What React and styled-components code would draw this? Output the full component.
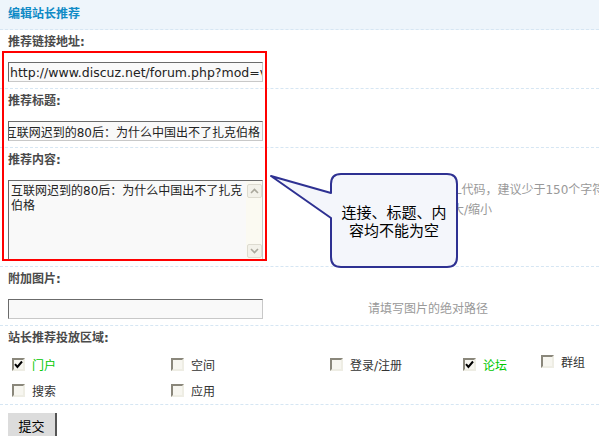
import React from 'react'
import styled, { createGlobalStyle } from 'styled-components'

const fontStack = `"DejaVu Sans", "Noto Sans CJK SC", sans-serif`
const labelColor = "#4a4a4a"
const dashColor = "#d6e6f3"
const greenOn = "#00c800"

const GlobalStyle = createGlobalStyle`
  html, body {
    margin: 0;
    padding: 0;
    overflow: hidden;
    background: #fff;
  }
  body {
    font-family: ${fontStack};
    font-size: 12px;
    color: #333;
  }
`

const Page = styled.div`
  position: relative;
  width: 599px;
  height: 436px;
  overflow: hidden;
`

const Head = styled.div`
  height: 29px;
  line-height: 29px;
  padding-left: 8px;
  background: #eef5fb;
  border-bottom: 1px dashed ${dashColor};
  color: #0f8ac6;
  font-weight: bold;
`

const Section = styled.div`
  padding: ${p => p.$top ?? 2}px 0 ${p => p.$bottom ?? 6}px 8px;
  border-bottom: ${p => p.$last ? 'none' : `1px dashed ${dashColor}`};
`

const Label = styled.div`
  line-height: 20px;
  font-weight: bold;
  color: ${labelColor};
`

const FieldRow = styled.div`
  display: flex;
  margin-top: 10px;
`

const FieldCell = styled.div`
  width: 360px;
  flex-shrink: 0;
`

const Hint = styled.div`
  color: #999;
  line-height: 20px;
  white-space: nowrap;
`

const TextBox = styled.div`
  box-sizing: border-box;
  width: 255px;
  height: 20px;
  border: 1px solid;
  border-color: #6b6b6b #c8c8c8 #c8c8c8 #6b6b6b;
  background: #f9f9f9;
  display: flex;
  align-items: center;
  justify-content: ${p => p.$end ? 'flex-end' : 'flex-start'};
  padding: 0 2px 0 1px;
  overflow: hidden;
  white-space: nowrap;
  color: #222;

  & > span {
    flex-shrink: 0;
  }
`

const Url = styled.span`
  font-size: 12.5px;
`

const AreaBox = styled.div`
  box-sizing: border-box;
  width: 255px;
  height: 80px;
  display: flex;
  border: 1px solid;
  border-color: #6b6b6b #c8c8c8 #c8c8c8 #6b6b6b;
  background: #f9f9f9;
`

const AreaText = styled.div`
  flex: 1;
  padding: 3px 2px 0 2px;
  line-height: 15px;
  color: #222;
  overflow: hidden;
`

const ScrollTrack = styled.div`
  width: 16px;
  box-sizing: border-box;
  padding: 3px 0 1px 1px;
  background: #fbfaf2;
  display: flex;
  flex-direction: column;
  justify-content: space-between;
`

const ScrollBtn = styled.div`
  width: 15px;
  height: 14px;
  box-sizing: border-box;
  border: 1px solid #dddbd0;
  border-radius: 2px;
  background: #f3f2ea;
  display: flex;
  align-items: center;
  justify-content: center;
`

const CheckRow = styled.div`
  display: flex;
  padding-left: 4px;
`

const CheckItem = styled.label`
  width: ${p => p.$w ? `${p.$w}px` : 'auto'};
  height: 26px;
  box-sizing: border-box;
  padding-bottom: ${p => p.$lift ? 6 : 0}px;
  display: flex;
  align-items: center;
  gap: 7px;
  color: ${p => p.$on ? greenOn : '#333'};
`

const Box = styled.span`
  width: 13px;
  height: 13px;
  box-sizing: border-box;
  border: 2px solid;
  border-color: #8a877b #eeede4 #eeede4 #8a877b;
  background: #f7f6f0;
  display: flex;
  align-items: center;
  justify-content: center;
`

const SubmitBtn = styled.button`
  width: 49px;
  height: 24px;
  padding: 0;
  border: none;
  border-right: 2px solid #555;
  background: #dcdcdc;
  font-family: ${fontStack};
  font-size: 13px;
  color: #000;
`

const RedFrame = styled.div`
  position: absolute;
  left: 2px;
  top: 51px;
  width: 265px;
  height: 210px;
  box-sizing: border-box;
  border: 2px solid #ff0000;
  pointer-events: none;
`

const Callout = styled.div`
  position: absolute;
  left: 269px;
  top: 172px;
  width: 191px;
  height: 98px;
`

const CalloutText = styled.div`
  position: absolute;
  left: 62px;
  top: 2px;
  width: 126px;
  height: 93px;
  box-sizing: border-box;
  padding: 0 9px;
  display: flex;
  align-items: center;
  justify-content: center;
  text-align: center;
  font-family: "Noto Sans CJK SC", sans-serif;
  font-size: 15px;
  line-height: 18px;
  color: #000;
`

function Arrow({ down }) {
  return (
    <svg width="9" height="6" viewBox="0 0 9 6">
      <path d={down ? "M1 1 L4.5 4.5 L8 1" : "M1 5 L4.5 1.5 L8 5"} fill="none" stroke="#aaa89c" strokeWidth="1.6" />
    </svg>
  )
}

function Check({ label, on, w, lift }) {
  return (
    <CheckItem $w={w} $on={on} $lift={lift}>
      <Box>
        {on && (
          <svg width="9" height="9" viewBox="0 0 9 9">
            <path d="M1 4.2 L3.4 7 L8 1.5" fill="none" stroke="#000" strokeWidth="2" />
          </svg>
        )}
      </Box>
      {label}
    </CheckItem>
  )
}

export default function App() {
  return (
    <Page>
      <GlobalStyle />
      <Head>编辑站长推荐</Head>

      <Section>
        <Label>推荐链接地址:</Label>
        <FieldRow>
          <FieldCell>
            <TextBox><Url>http://www.discuz.net/forum.php?mod=viewthread&amp;tid=2012</Url></TextBox>
          </FieldCell>
        </FieldRow>
      </Section>

      <Section>
        <Label>推荐标题:</Label>
        <FieldRow>
          <FieldCell>
            <TextBox $end><span>互联网迟到的80后：为什么中国出不了扎克伯格</span></TextBox>
          </FieldCell>
        </FieldRow>
      </Section>

      <Section>
        <Label>推荐内容:</Label>
        <FieldRow>
          <FieldCell>
            <AreaBox>
              <AreaText>互联网迟到的80后：为什么中国出不了扎克伯格</AreaText>
              <ScrollTrack>
                <ScrollBtn><Arrow /></ScrollBtn>
                <ScrollBtn><Arrow down /></ScrollBtn>
              </ScrollTrack>
            </AreaBox>
          </FieldCell>
          <Hint>
            内容不支持HTML代码，建议少于150个字符<br />
            可拖动右下角放大/缩小
          </Hint>
        </FieldRow>
      </Section>

      <Section>
        <Label>附加图片:</Label>
        <FieldRow>
          <FieldCell>
            <TextBox />
          </FieldCell>
          <Hint>请填写图片的绝对路径</Hint>
        </FieldRow>
      </Section>

      <Section $bottom={1}>
        <Label>站长推荐投放区域:</Label>
        <CheckRow style={{ marginTop: 3 }}>
          <Check label="门户" on w={159} />
          <Check label="空间" w={159} />
          <Check label="登录/注册" w={133} />
          <Check label="论坛" on w={78} />
          <Check label="群组" lift />
        </CheckRow>
        <CheckRow>
          <Check label="搜索" w={159} />
          <Check label="应用" w={159} />
        </CheckRow>
      </Section>

      <Section $top={8} $last>
        <SubmitBtn>提交</SubmitBtn>
      </Section>

      <RedFrame />

      <Callout>
        <svg width="191" height="98" viewBox="0 0 191 98">
          <path
            d="M2 4 L62 21 L62 12 Q62 2 72 2 L178 2 Q188 2 188 12 L188 85 Q188 95 178 95 L72 95 Q62 95 62 85 L62 46 Z"
            fill="#f4f6fb"
            stroke="#2e3192"
            strokeWidth="2"
            strokeLinejoin="round"
          />
        </svg>
        <CalloutText>连接、标题、内容均不能为空</CalloutText>
      </Callout>
    </Page>
  )
}
